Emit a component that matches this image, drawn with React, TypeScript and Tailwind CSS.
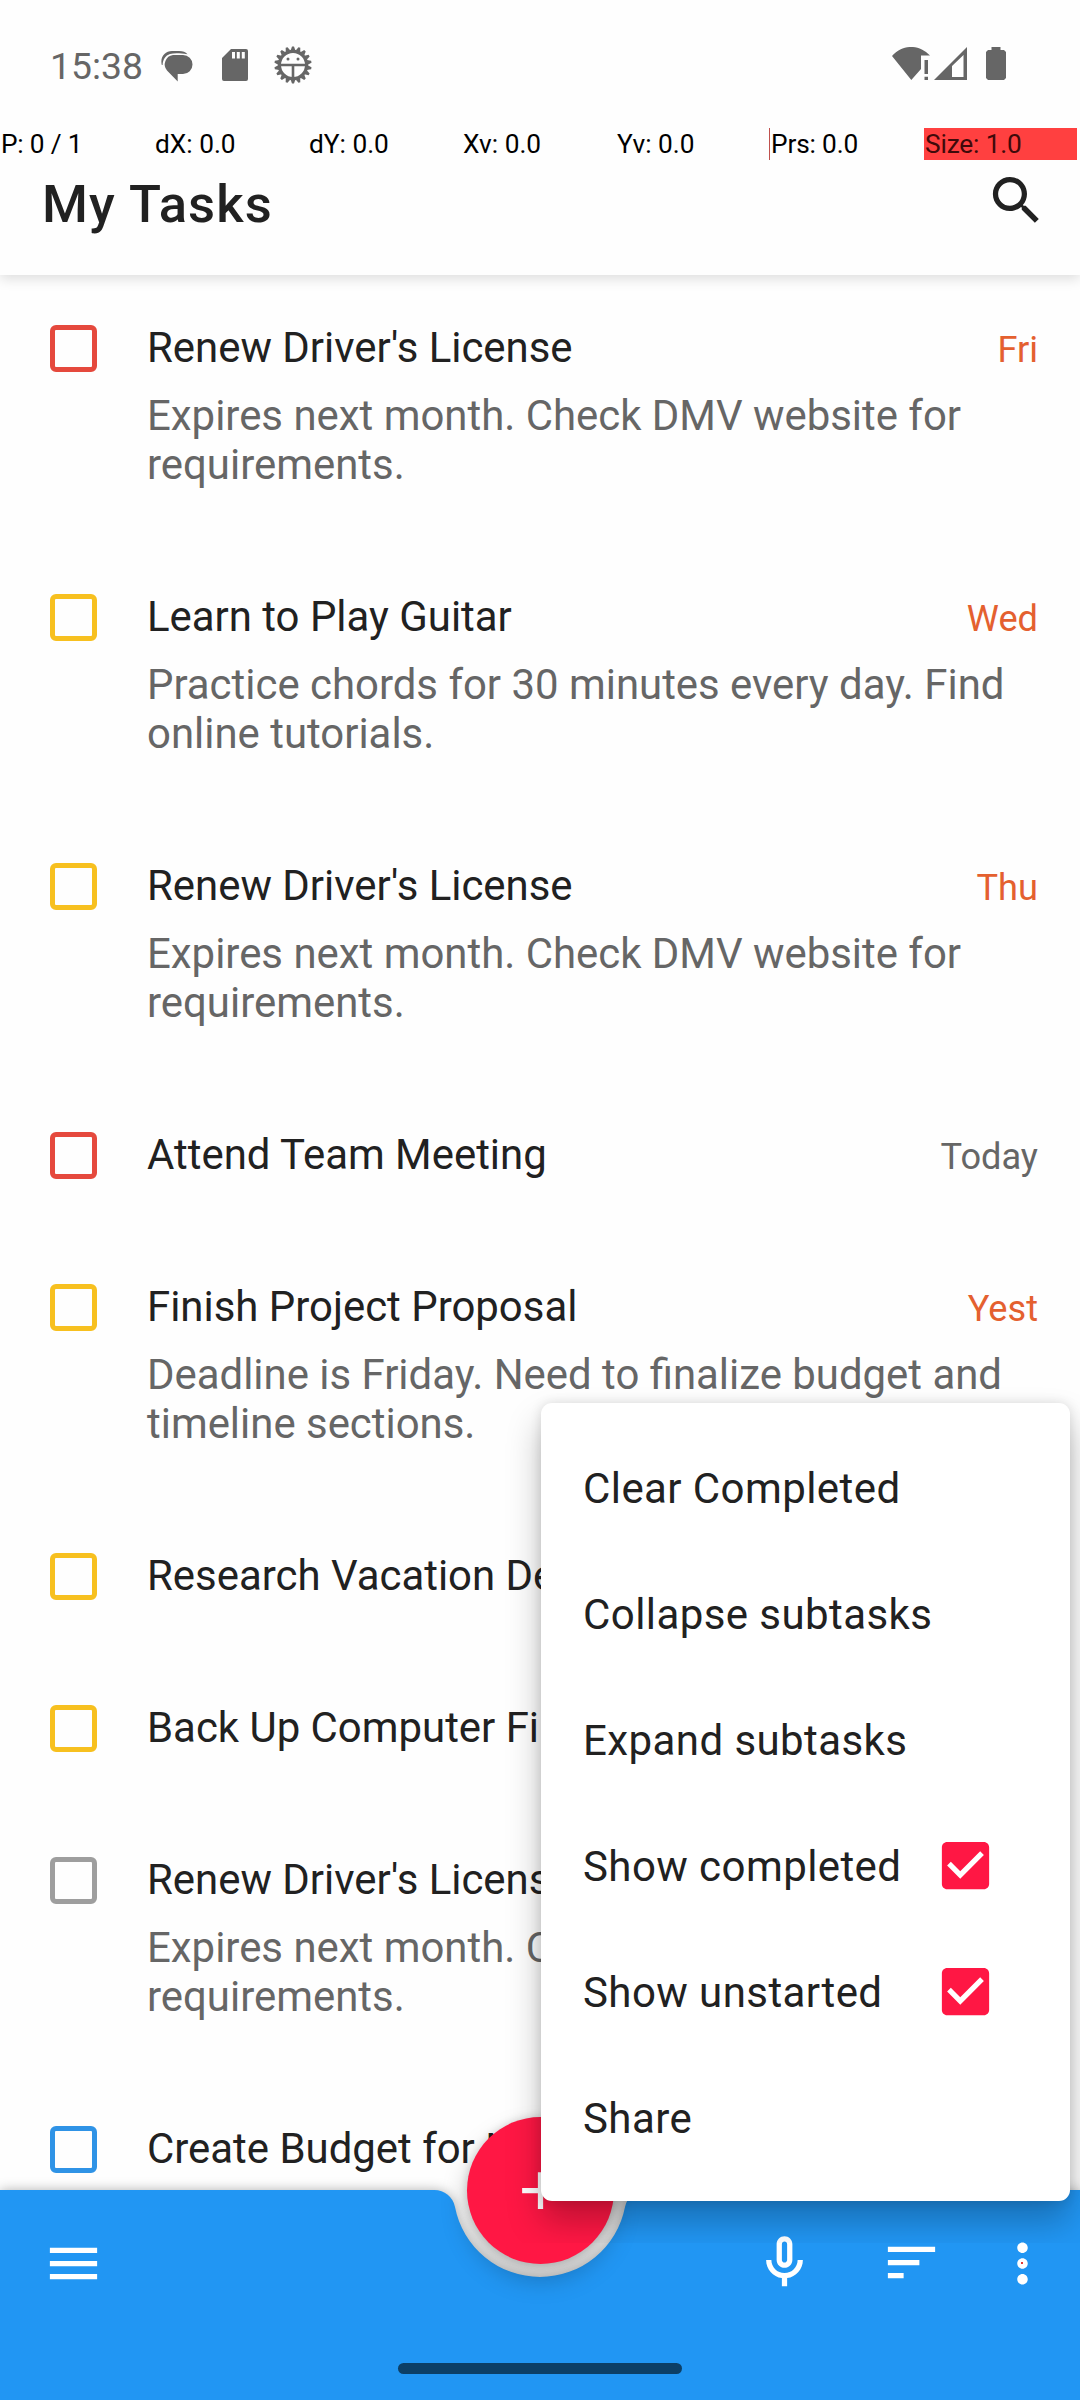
import React from "react";

type Task = { title: string; note?: string[]; due?: string; late?: boolean; border: string };

const tasks: Task[] = [
  { title: "Renew Driver's License", note: ["Expires next month. Check DMV website for", "requirements."], due: "Fri", late: true, border: "border-[#e5493d]" },
  { title: "Learn to Play Guitar", note: ["Practice chords for 30 minutes every day. Find", "online tutorials."], due: "Wed", late: true, border: "border-[#f7c01f]" },
  { title: "Renew Driver's License", note: ["Expires next month. Check DMV website for", "requirements."], due: "Thu", late: true, border: "border-[#f7c01f]" },
  { title: "Attend Team Meeting", due: "Today", border: "border-[#e5493d]" },
  { title: "Finish Project Proposal", note: ["Deadline is Friday. Need to finalize budget and", "timeline sections."], due: "Yest", late: true, border: "border-[#f7c01f]" },
  { title: "Research Vacation Destinations", border: "border-[#f7c01f]" },
  { title: "Back Up Computer Files", border: "border-[#f7c01f]" },
  { title: "Renew Driver's License", note: ["Expires next month. Check DMV website for", "requirements."], border: "border-[#9e9e9e]" },
  { title: "Create Budget for Next Month", border: "border-[#2f93e6]" },
];

function Icon({ d, className }: { d: string; className: string }) {
  return (
    <svg viewBox="0 0 24 24" fill="currentColor" className={className}>
      <path d={d} />
    </svg>
  );
}

function BugGear() {
  const teeth = Array.from({ length: 18 }, (_, i) => i * 20);
  return (
    <svg viewBox="-19 -19 38 38" className="ml-[26px] h-[38px] w-[38px]">
      <circle r="13.6" fill="none" stroke="#666" strokeWidth="3.2" />
      {teeth.map((a) => (
        <path key={a} d="M-2.4 -14.500 L-1 -18.600 H1 L2.400 -14.500Z" fill="#666" transform={`rotate(${a})`} />
      ))}
      <path d="M-14 0H14M0 0V14" stroke="#666" strokeWidth="2.600" />
      <circle cx="-5" cy="-6" r="1.5" fill="#666" />
      <circle cx="5" cy="-6" r="1.5" fill="#666" />
    </svg>
  );
}

function StatusBar() {
  return (
    <div className="flex h-[128px] items-start pt-[46px] text-[#666]">
      <span className="ml-[50px] mt-[-1px] w-[94px] text-[37.3px] leading-[43px]">15:38</span>
      <svg viewBox="0 0 32 31" className="ml-[17px] mt-[5px] h-[31px] w-[32px]" fill="#666">
        <path d="M12 4H22A9.500 9.500 0 0 1 22 23H16.700V30.500L6 19.500A9.500 9.500 0 0 1 12 4Z" />
        <path d="M0.800 14C-1.200 6 4 0 11 0H18C22 0 24.500 1.200 26.500 3.200C19 2.200 13 2 9 3C4.500 4.500 1.800 8.500 1.600 14Z" />
      </svg>
      <svg viewBox="0 0 26 32" className="ml-[29px] mt-[3px] h-[32px] w-[26px]">
        <path fillRule="evenodd" fill="#666" d="M9 0H24A2 2 0 0 1 26 2V30A2 2 0 0 1 24 32H2A2 2 0 0 1 0 30V9ZM10 3V9.500H13V3ZM14.800 3V9.500H17.800V3ZM19.800 3V9.500H22.800V3Z" />
      </svg>
      <BugGear />
      <svg viewBox="0 0 38 33" className="ml-auto mt-[1px] h-[33px] w-[38px]" fill="#666">
        <path d="M0 9C11 -3 27 -3 38 8.500H29V22L19.300 33Z" />
        <path d="M32.500 13H36V27H32.500ZM32.500 29.700H36V33H32.500Z" />
      </svg>
      <svg viewBox="0 0 33 33" className="ml-[4px] mt-[1px] h-[33px] w-[33px]">
        <path fillRule="evenodd" fill="#666" d="M0 33L33 0V33ZM18 19V30H29.500V8Z" />
      </svg>
      <svg viewBox="0 0 20 33" className="ml-[19px] mr-[74px] mt-[1px] h-[33px] w-[20px]">
        <path fill="#666" d="M5.500 0H14.500V3H18L20 5V31L18 33H2L0 31V5L2 3H5.500Z" />
      </svg>
    </div>
  );
}

function PointerRow() {
  const cells = ["dX: 0.0", "dY: 0.0", "Xv: 0.0", "Yv: 0.0"];
  return (
    <div className="flex h-8 text-[26.25px] leading-[32px] text-black">
      <span className="w-[154px] pl-px tracking-[-0.2px]">P: 0 / 1</span>
      {cells.map((c) => (
        <span key={c} className="w-[154px] pl-px">{c}</span>
      ))}
      <span className="-ml-px w-[154px] border-l border-[#c0504d] pl-px tracking-[-0.15px]">Prs: 0.0</span>
      <span className="ml-px w-[153px] bg-[#ff4040] pl-px tracking-[-0.15px] text-[#400a0a]">Size: 1.0</span>
    </div>
  );
}

function TaskRow({ task }: { task: Task }) {
  return (
    <div className={task.note ? "flex h-[269px] items-start" : "flex h-[152px] items-start"}>
      <span className={`ml-[50px] mt-[49px] h-[47px] w-[47px] shrink-0 rounded-[6px] border-[5px] ${task.border}`} />
      <div className="ml-[50px] mt-[47px] grow whitespace-nowrap text-[41.92px] leading-[49px]">
        <div className="text-[#212121]">{task.title}</div>
        {task.note && (
          <div className="mt-[19px] text-[#666]">
            {task.note.map((l) => (
              <div key={l}>{l}</div>
            ))}
          </div>
        )}
      </div>
      {task.due && (
        <span className={`absolute right-[42px] mt-[52px] text-[36.2px] leading-[43px] ${task.late ? "text-[#e4602f]" : "text-[#666]"}`}>{task.due}</span>
      )}
    </div>
  );
}

const menu = [
  { label: "Clear Completed" },
  { label: "Collapse subtasks" },
  { label: "Expand subtasks" },
  { label: "Show completed", checked: true },
  { label: "Show unstarted", checked: true },
  { label: "Share" },
];

function OverflowMenu() {
  return (
    <div className="absolute right-0 top-[1361px] overflow-hidden pb-[42px] pl-[42px] pr-[10px] pt-[42px]">
      <div className="h-[798px] w-[529px] rounded-[11px] bg-white py-[21px] shadow-[0_0_12px_rgba(0,0,0,0.12),0_20px_34px_rgba(0,0,0,0.26)]">
        {menu.map((m) => (
          <div key={m.label} className="flex h-[126px] items-center pl-[42px] text-[42px] tracking-[0.42px] text-[#212121]">
            <span className="whitespace-nowrap pt-[2px]">{m.label}</span>
            {m.checked && (
              <Icon
                className="ml-auto mr-[73px] h-[63px] w-[63px] text-[#ff1744]"
                d="M19 3H5c-1.11 0-2 .9-2 2v14c0 1.1.89 2 2 2h14c1.11 0 2-.9 2-2V5c0-1.1-.89-2-2-2zm-9 14l-5-5 1.41-1.41L10 14.17l7.59-7.59L19 8l-9 9z"
              />
            )}
          </div>
        ))}
      </div>
    </div>
  );
}

function BottomBar() {
  return (
    <div className="absolute inset-x-0 bottom-0 h-[210px]">
      <svg viewBox="0 0 1080 210" className="absolute inset-0 h-[210px] w-[1080px] overflow-visible drop-shadow-[0_0_6px_rgba(0,0,0,0.3)]">
        <path fill="#2196f3" d="M0 0H434.400A21 21 0 0 1 455 16.900A86.600 86.600 0 0 0 625 16.900A21 21 0 0 1 645.600 0H1080V210H0Z" />
      </svg>
      <div className="absolute left-[467px] top-[-73px] flex h-[147px] w-[147px] items-center justify-center rounded-full bg-[#ff1744] shadow-[0_0_8px_rgba(0,0,0,0.15),0_14px_26px_rgba(0,0,0,0.25)]">
        <Icon className="h-[63px] w-[63px] text-white" d="M19 13h-6v6h-2v-6H5v-2h6V5h2v6h6v2z" />
      </div>
      <div className="relative flex h-[147px] items-center pl-[42px] text-white">
        <Icon className="h-[63px] w-[63px]" d="M3 18h18v-2H3v2zm0-5h18v-2H3v2zm0-7v2h18V6H3z" />
        <Icon
          className="ml-[648px] h-[63px] w-[63px] -translate-y-px"
          d="M12 14c1.660 0 3-1.340 3-3V5c0-1.660-1.340-3-3-3S9 3.340 9 5v6c0 1.660 1.340 3 3 3zm-1-9c0-.55.45-1 1-1s1 .45 1 1v6c0 .55-.45 1-1 1s-1-.45-1-1V5zm6 6c0 2.760-2.240 5-5 5s-5-2.240-5-5H5c0 3.530 2.610 6.430 6 6.920V21h2v-3.080c3.390-.49 6-3.390 6-6.920h-2z"
        />
        <Icon className="ml-[64px] h-[63px] w-[63px] -translate-y-px" d="M3 18h6v-2H3v2zM3 6v2h18V6H3zm0 7h12v-2H3v2z" />
        <div className="relative ml-[48px] h-[63px] w-[63px]">
          <Icon className="h-[63px] w-[63px]" d="M12 8c1.100 0 2-.9 2-2s-.9-2-2-2-2 .9-2 2 .9 2 2 2zm0 2c-1.100 0-2 .9-2 2s.9 2 2 2 2-.9 2-2-.9-2-2-2zm0 6c-1.100 0-2 .9-2 2s.9 2 2 2 2-.9 2-2-.9-2-2-2z" />
          <span className="absolute left-[30px] top-[30px] h-[2px] w-[2px] bg-[#e53935]" />
        </div>
      </div>
      <div className="relative mx-auto mt-[26px] h-[11px] w-[284px] rounded-full bg-[#0c3f66]" />
    </div>
  );
}

export default function App() {
  return (
    <div className="relative h-[2400px] w-[1080px] overflow-hidden bg-[#fefefe] font-['Roboto',sans-serif]">
      <header className="relative z-0 h-[275px] bg-[#fefefe] shadow-[0_4px_12px_rgba(0,0,0,0.13)]">
        <StatusBar />
        <PointerRow />
        <div className="flex justify-between pl-[42px] pr-[32px]">
          <h1 className="mt-[13px] text-[52.5px] font-medium leading-[62px] tracking-[1.15px] text-[#212121]">My Tasks</h1>
          <Icon
            className="mt-[9px] h-[63px] w-[63px] text-[#212121]"
            d="M15.500 14h-.79l-.28-.27C15.410 12.590 16 11.110 16 9.500 16 5.910 13.090 3 9.500 3S3 5.910 3 9.500 5.910 16 9.500 16c1.610 0 3.090-.59 4.230-1.570l.27.28v.79l5 4.990L20.490 19l-4.990-5zm-6 0C7.010 14 5 11.990 5 9.500S7.010 5 9.500 5 14 7.010 14 9.500 11.990 14 9.500 14z"
          />
        </div>
      </header>
      <main className="pt-px">
        {tasks.map((t, i) => (
          <TaskRow key={i} task={t} />
        ))}
      </main>
      <BottomBar />
      <OverflowMenu />
    </div>
  );
}
